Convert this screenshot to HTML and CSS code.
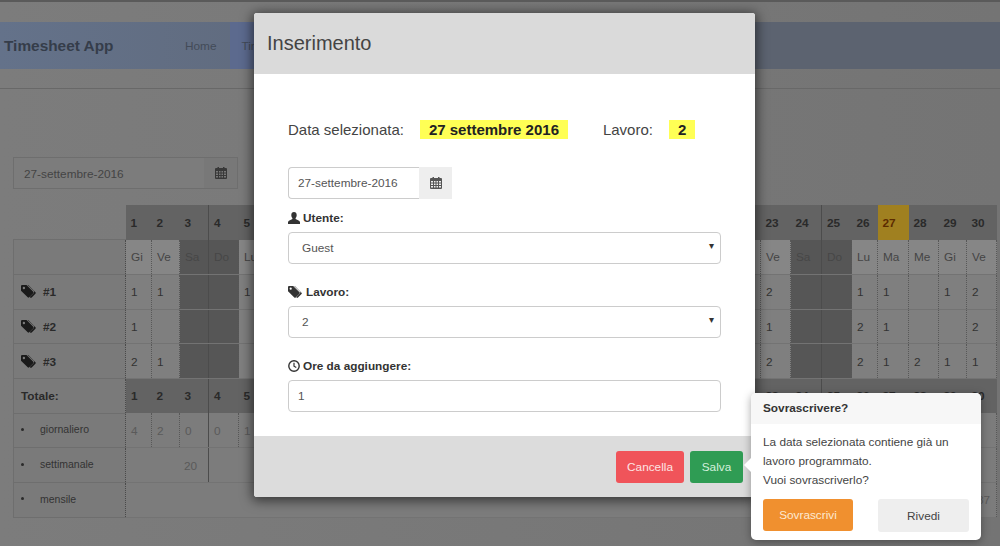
FILE: index.html
```html
<!DOCTYPE html>
<html lang="it">
<head>
    <meta charset="UTF-8">
    <meta name="viewport" content="width=device-width, initial-scale=1.0">
    <title>Timesheet App</title>
    <link rel="stylesheet" href="styles.css">
</head>
<body>
    <svg class="icon-defs" aria-hidden="true">
        <symbol id="i-calendar" viewBox="0 0 12 12">
            <path fill-rule="evenodd" d="M2.5 0h1.5v1h4V0h1.500v1H11a1 1 0 0 1 1 1v9a1 1 0 0 1-1 1H1a1 1 0 0 1-1-1V2a1 1 0 0 1 1-1h1.500zM1 4v1.500h2V4zm3 0v1.500h1.500V4zm2.500 0v1.500H8V4zM9 4v1.500h2V4zM1 6.500V8h2V6.500zm3 0V8h1.500V6.500zm2.500 0V8H8V6.500zm2.500 0V8h2V6.500zM1 9v1.500h2V9zm3 0v1.500h1.500V9zm2.500 0v1.500H8V9zM9 9v1.500h2V9z"/>
        </symbol>
        <symbol id="i-user" viewBox="0 0 12 12">
            <path d="M6 0C4.300 0 3.300 1.300 3.300 3c0 1.200.4 2.300 1.100 3v1L1 8.700C.3 9 0 9.600 0 10.300V12h12v-1.700c0-.7-.3-1.300-1-1.600L7.600 7V6c.7-.7 1.100-1.800 1.100-3C8.700 1.300 7.700 0 6 0z"/>
        </symbol>
        <symbol id="i-tags" viewBox="0 0 15 12">
            <path fill-rule="evenodd" d="M0 1v4.200L6.300 11.500a1 1 0 0 0 1.400 0l3.800-3.800a1 1 0 0 0 0-1.400L5.200 0H1a1 1 0 0 0-1 1zm2.700.6a1.100 1.100 0 1 1 0 2.200 1.100 1.100 0 0 1 0-2.200z"/>
            <path d="M6.800 0l6.700 6.700a1 1 0 0 1 0 1.400l-3.500 3.500a1 1 0 0 1-1.400 0l-.4-.4 3.600-3.600a1.600 1.600 0 0 0 0-2.200L6.200 0z"/>
        </symbol>
        <symbol id="i-clock" viewBox="0 0 12 12">
            <circle cx="6" cy="6" r="5.200" fill="none" stroke="currentColor" stroke-width="1.400"/>
            <path d="M6 2.800V6.200l2.300 1.400" fill="none" stroke="currentColor" stroke-width="1.200"/>
        </symbol>
    </svg>

    <nav class="navbar">
        <span class="brand">Timesheet App</span>
        <a class="nav-link">Home</a>
        <a class="nav-link active">Timesheet</a>
    </nav>
    <hr class="page-rule">

    <div class="date-picker page-date">
        <span>27-settembre-2016</span>
        <span class="addon"><svg class="icon"><use href="#i-calendar"/></svg></span>
    </div>

    <table class="sheet">
        <colgroup>
            <col class="w-first"><col class="w26"><col class="w28"><col class="w29"><col class="w30">
            <col span="18" class="w29">
            <col class="w30"><col class="w31"><col class="w30"><col class="w26"><col class="w31"><col class="w30"><col class="w28"><col class="w30">
        </colgroup>
        <tr class="num-row">
            <th class="blank"></th>
            <th>1</th><th>2</th><th class="wk">3</th><th>4</th><th>5</th><th>6</th><th>7</th><th>8</th><th>9</th><th class="wk">10</th>
            <th>11</th><th>12</th><th>13</th><th>14</th><th>15</th><th>16</th><th class="wk">17</th><th>18</th><th>19</th><th>20</th>
            <th>21</th><th>22</th><th>23</th><th class="wk">24</th><th>25</th><th>26</th><th class="today">27</th><th>28</th><th>29</th><th>30</th>
        </tr>
        <tr class="name-row">
            <td class="first"></td>
            <td>Gi</td><td>Ve</td><td class="off wk">Sa</td><td class="off">Do</td><td>Lu</td><td>Ma</td><td>Me</td><td>Gi</td><td>Ve</td><td class="off wk">Sa</td>
            <td class="off">Do</td><td>Lu</td><td>Ma</td><td>Me</td><td>Gi</td><td>Ve</td><td class="off wk">Sa</td><td class="off">Do</td><td>Lu</td><td>Ma</td>
            <td>Me</td><td>Gi</td><td>Ve</td><td class="off wk">Sa</td><td class="off">Do</td><td>Lu</td><td>Ma</td><td>Me</td><td>Gi</td><td>Ve</td>
        </tr>
        <tr>
            <td class="first job"><svg class="icon tag"><use href="#i-tags"/></svg>#1</td>
            <td>1</td><td>1</td><td class="off wk"></td><td class="off"></td><td>1</td><td></td><td></td><td></td><td></td><td class="off wk"></td>
            <td class="off"></td><td></td><td></td><td></td><td></td><td></td><td class="off wk"></td><td class="off"></td><td></td><td></td>
            <td></td><td></td><td>2</td><td class="off wk"></td><td class="off"></td><td>1</td><td>1</td><td></td><td>1</td><td>2</td>
        </tr>
        <tr>
            <td class="first job"><svg class="icon tag"><use href="#i-tags"/></svg>#2</td>
            <td>1</td><td></td><td class="off wk"></td><td class="off"></td><td></td><td></td><td></td><td></td><td></td><td class="off wk"></td>
            <td class="off"></td><td></td><td></td><td></td><td></td><td></td><td class="off wk"></td><td class="off"></td><td></td><td></td>
            <td></td><td></td><td>1</td><td class="off wk"></td><td class="off"></td><td>2</td><td>1</td><td></td><td></td><td>2</td>
        </tr>
        <tr>
            <td class="first job"><svg class="icon tag"><use href="#i-tags"/></svg>#3</td>
            <td>2</td><td>1</td><td class="off wk"></td><td class="off"></td><td></td><td></td><td></td><td></td><td></td><td class="off wk"></td>
            <td class="off"></td><td></td><td></td><td></td><td></td><td></td><td class="off wk"></td><td class="off"></td><td></td><td></td>
            <td></td><td></td><td>2</td><td class="off wk"></td><td class="off"></td><td>2</td><td>1</td><td>2</td><td>1</td><td>1</td>
        </tr>
        <tr class="num-row total-row">
            <th class="first">Totale:</th>
            <th>1</th><th>2</th><th class="wk">3</th><th>4</th><th>5</th><th>6</th><th>7</th><th>8</th><th>9</th><th class="wk">10</th>
            <th>11</th><th>12</th><th>13</th><th>14</th><th>15</th><th>16</th><th class="wk">17</th><th>18</th><th>19</th><th>20</th>
            <th>21</th><th>22</th><th>23</th><th class="wk">24</th><th>25</th><th>26</th><th>27</th><th>28</th><th>29</th><th>30</th>
        </tr>
        <tr class="sum-row">
            <td class="first"><span class="bullet">giornaliero</span></td>
            <td>4</td><td>2</td><td class="wk">0</td><td>0</td><td>1</td><td></td><td></td><td></td><td></td><td class="wk"></td>
            <td></td><td></td><td></td><td></td><td></td><td></td><td class="wk"></td><td></td><td></td><td></td>
            <td></td><td></td><td>5</td><td class="wk">0</td><td>0</td><td>5</td><td>3</td><td>2</td><td>2</td><td>5</td>
        </tr>
        <tr class="sum-row">
            <td class="first"><span class="bullet">settimanale</span></td>
            <td colspan="3" class="wk week-sum">20</td>
            <td colspan="7" class="wk"></td>
            <td colspan="7" class="wk"></td>
            <td colspan="7" class="wk"></td>
            <td colspan="6"></td>
        </tr>
        <tr class="sum-row">
            <td class="first"><span class="bullet">mensile</span></td>
            <td colspan="30" class="month-sum">87</td>
        </tr>
    </table>

    <div class="modal">
        <header class="modal-header">Inserimento</header>
        <div class="modal-body">
            <p class="summary">
                <span>Data selezionata:</span>
                <mark class="mark-date">27 settembre 2016</mark>
                <span class="summary-job">Lavoro:</span>
                <mark class="mark-job">2</mark>
            </p>
            <div class="date-picker modal-date">
                <input type="text" value="27-settembre-2016">
                <span class="addon"><svg class="icon"><use href="#i-calendar"/></svg></span>
            </div>
            <label class="field">
                <span class="field-label"><svg class="icon"><use href="#i-user"/></svg>Utente:</span>
                <span class="select-wrap"><select><option>Guest</option></select></span>
            </label>
            <label class="field">
                <span class="field-label"><svg class="icon icon-wide"><use href="#i-tags"/></svg>Lavoro:</span>
                <span class="select-wrap"><select><option>2</option></select></span>
            </label>
            <label class="field">
                <span class="field-label"><svg class="icon"><use href="#i-clock"/></svg>Ore da aggiungere:</span>
                <input class="text-input" type="text" value="1">
            </label>
        </div>
        <footer class="modal-footer">
            <button class="btn btn-danger">Cancella</button>
            <button class="btn btn-success">Salva</button>
        </footer>
    </div>

    <div class="popover">
        <div class="popover-title">Sovrascrivere?</div>
        <div class="popover-body">
            <p>La data selezionata contiene già un lavoro programmato.<br>Vuoi sovrascriverlo?</p>
            <div class="popover-actions">
                <button class="btn btn-warning">Sovrascrivi</button>
                <button class="btn btn-default">Rivedi</button>
            </div>
        </div>
    </div>
</body>
</html>
```

FILE: styles.css
```css
* {
    box-sizing: border-box;
}
html, body {
    height: 546px;
    overflow: hidden;
}
body {
    margin: 0;
    padding-top: 22px;
    position: relative;
    background: linear-gradient(90deg, #7c7c7c, #747474);
    border-top: 2px solid #5a5a5a;
    font-family: "Liberation Sans", Arial, sans-serif;
    font-size: 11.800px;
    color: #333;
}
.icon-defs {
    display: none;
}
.icon {
    width: 12px;
    height: 12px;
    fill: currentColor;
}

/* page behind the dialog */
.navbar {
    display: flex;
    align-items: center;
    height: 47px;
    margin-top: -2px;
    background: linear-gradient(90deg, #64728a, #5c6370 60%);
    color: #434b58;
}
.brand {
    width: 181px;
    padding-left: 4px;
    font-size: 15.400px;
    font-weight: bold;
    color: #353d4a;
}
.nav-link {
    padding: 0 14px 0 4px;
}
.nav-link.active {
    align-self: stretch;
    display: flex;
    align-items: center;
    padding: 0 11px;
    background: #5c6a8e;
}
.page-rule {
    height: 1px;
    margin: 19px 0 0;
    border: 0;
    background: #686868;
}
.date-picker {
    display: flex;
    align-items: stretch;
    height: 32px;
}
.date-picker .addon {
    display: flex;
    align-items: center;
    justify-content: center;
}
.page-date {
    width: 225px;
    margin: 68px 0 16px 13px;
    border: 1px solid #6e6e6e;
    background: #7c7c7c;
    color: #444;
}
.page-date span:first-child {
    flex: 1;
    padding: 9px 10px;
}
.page-date .addon {
    width: 33px;
    background: #787878;
    color: #383838;
}
.sheet {
    width: 983px;
    margin-left: 13px;
    table-layout: fixed;
    border-collapse: collapse;
    font-size: 11.800px;
}
.w-first { width: 112px; }
.w26 { width: 26px; }
.w28 { width: 28px; }
.w29 { width: 29px; }
.w30 { width: 30px; }
.w31 { width: 31px; }
.sheet tr {
    height: 34.700px;
}
.sheet th, .sheet td {
    padding: 1px 0 0 5px;
    text-align: left;
    font-weight: normal;
    white-space: nowrap;
}
.sheet td {
    border-right: 1px dotted #585858;
    border-bottom: 1px solid #737373;
    background: #7f7f7f;
    color: #333;
}
.sheet .name-row td {
    background: #868686;
    color: #444;
}
.sheet td.off, .sheet .name-row td.off {
    background: #565656;
    color: #474747;
}
.sheet td.wk, .sheet th.wk {
    border-right: 1px solid #4c4c4c;
}
.num-row th {
    background: #636363;
    color: #2a2a2a;
    font-weight: bold;
}
.num-row th.blank {
    background: none;
}
.num-row th.today {
    background: #a08020;
    color: #5c2c00;
}
.sheet .total-row th {
    padding-top: 0;
}
.sheet .first, .sheet .name-row .first, .sheet .total-row th.first {
    padding-left: 7px;
    border: 1px solid #6e6e6e;
    border-right: 1px dotted #4a4a4a;
    background: #7a7a7a;
    color: #2a2a2a;
}
.sheet .total-row th.first {
    font-weight: bold;
}
.sheet .job {
    font-weight: bold;
}
.tag {
    width: 16px;
    height: 13px;
    margin-right: 6px;
    vertical-align: -2px;
    color: #1a1a1a;
}
.bullet {
    display: flex;
    align-items: center;
    gap: 16px;
    margin-top: -3px;
    font-size: 10.500px;
    color: #333;
}
.bullet::before {
    content: "";
    width: 3px;
    height: 3px;
    border-radius: 50%;
    background: #2a2a2a;
}
.sum-row td {
    background: #7c7c7c;
    color: #5a5a5a;
}
.sum-row .first {
    color: #333;
}
.sheet td.week-sum {
    padding-right: 11px;
    text-align: right;
}
.sheet td.month-sum {
    padding-right: 6px;
    text-align: right;
}

/* dialog */
.modal {
    position: absolute;
    top: 11px;
    left: 254px;
    width: 501px;
    height: 484px;
    display: flex;
    flex-direction: column;
    background: #fff;
    border-radius: 3px;
    box-shadow: 0 2px 12px 2px rgba(0, 0, 0, .55);
}
.modal-header {
    height: 61px;
    padding: 18px 13px 0;
    background: #dadada;
    border-radius: 3px 3px 0 0;
    font-size: 20px;
    line-height: 24px;
    color: #444;
}
.modal-body {
    flex: 1;
    padding: 46px 34px 0;
    color: #555;
}
.summary {
    display: flex;
    align-items: center;
    height: 19px;
    margin: 0 0 28px;
    font-size: 15px;
    color: #444;
}
.summary mark {
    padding: 0 9px;
    background: #ffff55;
    font-weight: bold;
    line-height: 19px;
    color: #222;
}
.mark-date {
    margin-left: 16px;
    width: 148px;
    white-space: nowrap;
}
.summary-job {
    margin: 0 16px 0 35px;
}
.mark-job {
    width: 26px;
}
.modal-date {
    width: 164px;
    margin-bottom: 12px;
}
.modal-date input, .text-input, .select-wrap select {
    height: 100%;
    border: 1px solid #ccc;
    font: inherit;
    color: #555;
    background: #fff;
    outline: 0;
}
.modal-date input {
    width: 131px;
    padding: 0 9px;
    border-right: 0;
    border-radius: 4px 0 0 4px;
}
.modal-date .addon {
    width: 33px;
    background: #eee;
    color: #555;
}
.field {
    display: block;
    margin-bottom: 21px;
}
.field-label {
    display: flex;
    align-items: center;
    gap: 3px;
    height: 14px;
    margin-bottom: 7px;
    font-weight: bold;
    color: #333;
}
.icon-wide {
    width: 15px;
}
.select-wrap {
    display: block;
    position: relative;
    height: 32px;
}
.select-wrap::after {
    content: "▾";
    position: absolute;
    top: 8px;
    right: 7px;
    font-size: 10px;
    color: #333;
}
.select-wrap select {
    display: block;
    width: 100%;
    padding: 0 13px;
    border-radius: 4px;
    appearance: none;
}
.text-input {
    display: block;
    width: 100%;
    height: 32px;
    padding: 0 9px;
    border-radius: 4px;
}
.modal-footer {
    display: flex;
    justify-content: flex-end;
    gap: 6px;
    height: 61px;
    padding: 15px 12px 0 0;
    background: #dcdcdc;
    border-radius: 0 0 3px 3px;
}
.btn {
    height: 32px;
    border: 0;
    border-radius: 3px;
    font: inherit;
}
.btn-danger {
    width: 68px;
    background: #f0545a;
    color: #fde4e4;
}
.btn-success {
    width: 53px;
    background: #2f9c54;
    color: #d5f0dd;
}

/* popover next to Salva */
.popover {
    position: absolute;
    top: 391px;
    left: 751px;
    width: 230px;
    height: 147px;
    background: #fff;
    border-radius: 5px;
    box-shadow: 0 2px 8px rgba(0, 0, 0, .35);
}
.popover::before {
    content: "";
    position: absolute;
    top: 65px;
    left: -7px;
    border: 7px solid transparent;
    border-left: 0;
    border-right-color: #fff;
}
.popover-title {
    height: 31px;
    padding: 8px 12px 0;
    background: #f7f7f7;
    border-radius: 5px 5px 0 0;
    font-weight: bold;
    line-height: 15px;
    color: #333;
}
.popover-body {
    padding: 9px 12px 0;
}
.popover-body p {
    margin: 0 0 9px;
    line-height: 19px;
    color: #444;
}
.popover-actions {
    display: flex;
    justify-content: space-between;
}
.btn-warning {
    width: 90px;
    background: #f0902f;
    color: #fde9d2;
}
.btn-default {
    width: 91px;
    height: 33px;
    background: #eee;
    color: #444;
}
```
